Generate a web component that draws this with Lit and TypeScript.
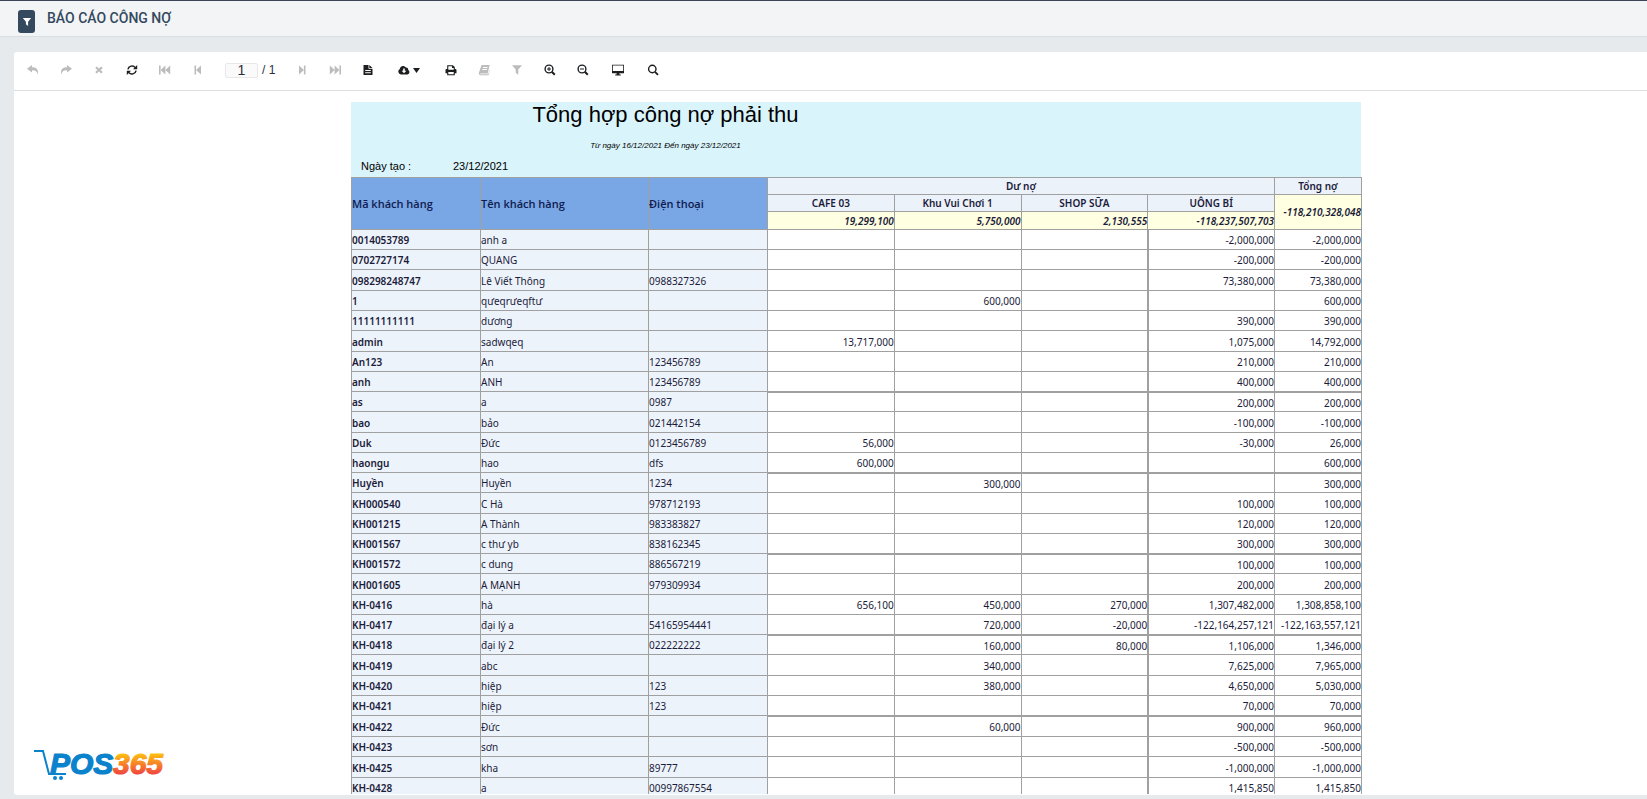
import { LitElement, html, css, svg } from "lit";
import { customElement } from "lit/decorators.js";

type Row = [string, string, string, string, string, string, string, string];

const ROWS: Row[] = [
  ["0014053789", "anh a", "", "", "", "", "-2,000,000", "-2,000,000"],
  ["0702727174", "QUANG", "", "", "", "", "-200,000", "-200,000"],
  ["098298248747", "Lê Viết Thông", "0988327326", "", "", "", "73,380,000", "73,380,000"],
  ["1", "qưeqrưeqftư", "", "", "600,000", "", "", "600,000"],
  ["11111111111", "dương", "", "", "", "", "390,000", "390,000"],
  ["admin", "sadwqeq", "", "13,717,000", "", "", "1,075,000", "14,792,000"],
  ["An123", "An", "123456789", "", "", "", "210,000", "210,000"],
  ["anh", "ANH", "123456789", "", "", "", "400,000", "400,000"],
  ["as", "a", "0987", "", "", "", "200,000", "200,000"],
  ["bao", "bảo", "021442154", "", "", "", "-100,000", "-100,000"],
  ["Duk", "Đức", "0123456789", "56,000", "", "", "-30,000", "26,000"],
  ["haongu", "hao", "dfs", "600,000", "", "", "", "600,000"],
  ["Huyền", "Huyền", "1234", "", "300,000", "", "", "300,000"],
  ["KH000540", "C Hà", "978712193", "", "", "", "100,000", "100,000"],
  ["KH001215", "A Thành", "983383827", "", "", "", "120,000", "120,000"],
  ["KH001567", "c thư yb", "838162345", "", "", "", "300,000", "300,000"],
  ["KH001572", "c dung", "886567219", "", "", "", "100,000", "100,000"],
  ["KH001605", "A MẠNH", "979309934", "", "", "", "200,000", "200,000"],
  ["KH-0416", "hà", "", "656,100", "450,000", "270,000", "1,307,482,000", "1,308,858,100"],
  ["KH-0417", "đại lý a", "54165954441", "", "720,000", "-20,000", "-122,164,257,121", "-122,163,557,121"],
  ["KH-0418", "đại lý 2", "022222222", "", "160,000", "80,000", "1,106,000", "1,346,000"],
  ["KH-0419", "abc", "", "", "340,000", "", "7,625,000", "7,965,000"],
  ["KH-0420", "hiệp", "123", "", "380,000", "", "4,650,000", "5,030,000"],
  ["KH-0421", "hiệp", "123", "", "", "", "70,000", "70,000"],
  ["KH-0422", "Đức", "", "", "60,000", "", "900,000", "960,000"],
  ["KH-0423", "sơn", "", "", "", "", "-500,000", "-500,000"],
  ["KH-0425", "kha", "89777", "", "", "", "-1,000,000", "-1,000,000"],
  ["KH-0428", "a", "00997867554", "", "", "", "1,415,850", "1,415,850"],
];

// All glyphs are drawn on a 12 × 12 grid.
const ICONS = {
  undo: svg`<path d="M5 1 0 4.800 5 8.600V6.300C8 6.200 9.800 7 10.600 10.400 12 6 9.600 3.300 5 3.300Z"/>`,
  redo: svg`<path d="M7 1l5 3.800L7 8.600V6.300C4 6.200 2.200 7 1.400 10.400 0 6 2.400 3.300 7 3.300Z"/>`,
  close: svg`<path d="M3 3.200l6 5.600M9 3.200l-6 5.600" stroke="currentColor" stroke-width="2.200"/>`,
  refresh: svg`<path d="M1.900 5.400A4.200 4.200 0 0 1 9.300 3.600M10.100 6.600A4.200 4.200 0 0 1 2.700 8.400" fill="none" stroke="currentColor" stroke-width="1.500"/><path d="M11.200 1v4.200H7ZM.8 11V6.800H5Z"/>`,
  first: svg`<path d="M0 1.500h1.600v9H0ZM1.600 6 6.400 1.600v8.800ZM6.400 6l4.800-4.400v8.800Z"/>`,
  prev: svg`<path d="M2.500 1.500h1.600v9H2.500ZM4.100 6l4.900-4.400v8.800Z"/>`,
  next: svg`<path d="M9.500 1.500H7.900v9h1.600ZM7.900 6 3 1.600v8.800Z"/>`,
  last: svg`<path d="M12 1.500h-1.600v9H12ZM10.400 6 5.600 1.600v8.800ZM5.600 6 .8 1.600v8.800Z"/>`,
  doc: svg`<path fill-rule="evenodd" d="M1.500 1h5v3.800h4V11h-9ZM7.300 1l3.200 3H7.300ZM3.200 6v1h5.600V6ZM3.200 8.200v1h5.600v-1Z"/>`,
  cloud: svg`<path fill-rule="evenodd" d="M3 10.400A2.900 2.900 0 0 1 1.800 5 3.400 3.400 0 0 1 8 3.500 2.200 2.200 0 0 1 10.200 6 2.400 2.400 0 0 1 9.600 10.400ZM5.200 4.600v2.200H3.600L6 9.300l2.400-2.500H6.800V4.600Z"/>`,
  print: svg`<path fill-rule="evenodd" d="M2.200 5V1.200h5.600l2 1.800v2h.7A1.200 1.200 0 0 1 11.500 6v3.300H9.800v1.900H2.200V9.300H.5V6a1 1 0 0 1 1-1ZM3.300 2.200V5.700h5.400V3.900H7V2.200ZM3.300 8v2.200h5.400V8Z"/>`,
  book: svg`<path fill-rule="evenodd" d="M3.600 1h8L9.700 9.500H2.200a.6.6 0 0 0 .2.700h8L11.800 4 11 10.500Q10.800 11.200 10 11.200H2.400Q.6 10.800.8 9ZM5 3l-.2.900h4.600l.2-.9ZM4.500 5l-.2.900h4.600l.2-.9Z"/>`,
  filter: svg`<path d="M1 1.200h10L7.300 5.600v5.200L4.700 8.800V5.600Z"/>`,
  zoomIn: svg`<circle cx="5" cy="5" r="3.900" fill="none" stroke="currentColor" stroke-width="1.400"/><path d="M7.800 7.800l3 3" stroke="currentColor" stroke-width="2"/><path d="M3 5h4M5 3v4" stroke="currentColor" stroke-width="1"/>`,
  zoomOut: svg`<circle cx="5" cy="5" r="3.900" fill="none" stroke="currentColor" stroke-width="1.400"/><path d="M7.800 7.800l3 3" stroke="currentColor" stroke-width="2"/><path d="M3 5h4" stroke="currentColor" stroke-width="1"/>`,
  monitor: svg`<path fill-rule="evenodd" d="M0 .8h12v8.400H7.400v1.200h1.400v1H3.200v-1h1.400V9.200H0ZM.8 1.600v5.500h10.400V1.600Z"/>`,
  search: svg`<circle cx="5.300" cy="5" r="3.700" fill="none" stroke="currentColor" stroke-width="1.400"/><path d="M8 7.800l3 3" stroke="currentColor" stroke-width="1.800"/>`,
};

@customElement("app-root")
export class AppRoot extends LitElement {
  static styles = css`
    :host {
      display: flex;
      flex-direction: column;
      height: 100vh;
      box-sizing: border-box;
      background: #e6eaed;
      color: #14142c;
      font-family: "Liberation Sans", Arial, sans-serif;
      overflow: hidden;
    }
    * { box-sizing: border-box; }
    button { border: 0; padding: 0; background: none; color: inherit; font: inherit; }
    svg { display: block; fill: currentColor; }

    .topbar {
      display: flex;
      gap: 12px;
      height: 37px;
      flex: none;
      padding: 9px 18px 0;
      border-top: 1px solid #3a4358;
      border-bottom: 1px solid #d9dee2;
      background: #f2f4f6;
    }
    .filter-toggle {
      display: grid;
      place-items: center;
      width: 17px;
      height: 23px;
      border-radius: 3px;
      background: #34495e;
      color: #fff;
    }
    .filter-toggle svg { width: 10px; height: 10px; }
    h1 {
      margin: 0;
      color: #34495e;
      font: 500 14px/17px Roboto, sans-serif;
    }

    .panel {
      flex: 1;
      min-height: 0;
      display: flex;
      flex-direction: column;
      position: relative;
      margin: 15px 0 4px 14px;
      padding-bottom: 1px;
      border-radius: 3px 0 0 3px;
      background: #fff;
    }
    .toolbar {
      display: flex;
      align-items: center;
      flex: none;
      height: 39px;
      padding: 0 0 2px 2px;
      border-bottom: 1px solid #dcdfe1;
      color: #1c1e20;
    }
    .tool {
      display: flex;
      align-items: center;
      justify-content: center;
      gap: 3px;
      width: 33px;
      height: 24px;
    }
    .tool svg { width: 12px; height: 12px; }
    .tool:disabled { color: #bcbcbc; }
    .tool.menu { width: 50px; }
    .tool.monitor { width: 37px; }
    .tool .caret { width: 7px; height: 5px; }
    .pager {
      display: flex;
      align-items: center;
      gap: 4px;
      width: 71px;
      padding-left: 11px;
      font-size: 12px;
      color: #2a2f3a;
    }
    .pager input {
      width: 33px;
      height: 15px;
      padding: 0;
      border: 1px solid #e8e8e8;
      border-radius: 2px;
      background: #fafafa;
      color: #2a2f3a;
      text-align: center;
      font: 14px/13px "Liberation Sans", Arial, sans-serif;
    }

    .viewer {
      flex: 1;
      min-height: 0;
      overflow: hidden;
      padding: 11px 0 0 52px;
    }
    .report { width: 1011px; margin: 0 auto; }
    .heading {
      height: 75px;
      width: 1010px;
      background: #daf4fb;
      color: #000;
    }
    h2 {
      margin: 0;
      padding-right: 381px;
      text-align: center;
      font-weight: 400;
      font-size: 22px;
      line-height: 26px;
    }
    .range {
      margin: 0;
      padding: 11px 381px 0 0;
      text-align: center;
      font-style: italic;
      font-size: 8px;
      line-height: 14px;
    }
    .created {
      display: flex;
      margin: 0;
      padding: 6px 0 0 10px;
      font-size: 11px;
      line-height: 14px;
    }
    .created dt { width: 92px; }
    .created dd { margin: 0; }

    table {
      width: 100%;
      table-layout: fixed;
      border-collapse: separate;
      border-spacing: 0;
      border-right: 1px solid #a0a0a0;
      font: 10px/12px "Noto Sans", sans-serif;
      color: #1b1b3a;
    }
    th, td {
      padding: 0;
      border-top: 1px solid #a0a0a0;
      border-left: 1px solid #a0a0a0;
      white-space: nowrap;
    }
    .c-code { width: 129px; }
    .c-name { width: 168px; }
    .c-phone { width: 119px; }
    .c-total { width: 87px; }
    thead tr { height: 17px; }
    thead tr:last-child { height: 18px; }
    thead th { background: #ebf2fa; font-weight: 600; }
    thead .key {
      background: #79a6e4;
      color: #101c50;
      text-align: left;
      font: 600 11px/14px "Open Sans", sans-serif;
    }
    thead .sum {
      background: #ffffe1;
      text-align: right;
      font-weight: 600;
      font-style: italic;
    }
    tbody tr { height: 20px; }
    tbody tr:is(:nth-child(3), :nth-child(6), :nth-child(10), :nth-child(14),
      :nth-child(18), :nth-child(22), :nth-child(25), :nth-child(27)) { height: 21px; }
    tbody th, tbody td { padding-top: 1px; }
    tbody th { font-weight: 600; }
    tbody th, .text { background: #edf3fb; text-align: left; }
    .num { text-align: right; }
    tbody tr:nth-child(4n + 9) .num { border-top-width: 2px; }
    tbody .num:nth-child(7) { border-left-width: 2px; }

    .logo {
      position: absolute;
      left: 19px;
      bottom: 13px;
      width: 134px;
      height: 34px;
    }
    .logo text {
      font: italic 700 30px "Liberation Sans", Arial, sans-serif;
      stroke-width: 1.200px;
      stroke-linejoin: round;
    }
  `;

  private tool(label: string, icon: keyof typeof ICONS, disabled = false) {
    return html`<button class="tool ${icon}" aria-label=${label} ?disabled=${disabled}>
      <svg viewBox="0 0 12 12">${ICONS[icon]}</svg>
    </button>`;
  }

  private row([code, name, phone, ...nums]: Row) {
    return html`<tr>
      <th scope="row">${code}</th>
      <td class="text">${name}</td>
      <td class="text">${phone}</td>
      ${nums.map((n) => html`<td class="num">${n}</td>`)}
    </tr>`;
  }

  render() {
    return html`
      <header class="topbar">
        <button class="filter-toggle" aria-label="Bộ lọc">
          <svg viewBox="0 0 12 12">${ICONS.filter}</svg>
        </button>
        <h1>BÁO CÁO CÔNG NỢ</h1>
      </header>
      <main class="panel">
        <div class="toolbar">
          ${this.tool("Lùi", "undo", true)}
          ${this.tool("Tiến", "redo", true)}
          ${this.tool("Dừng", "close", true)}
          ${this.tool("Tải lại", "refresh")}
          ${this.tool("Trang đầu", "first", true)}
          ${this.tool("Trang trước", "prev", true)}
          <div class="pager">
            <input aria-label="Trang" value="1" /><span>/ 1</span>
          </div>
          ${this.tool("Trang sau", "next", true)}
          ${this.tool("Trang cuối", "last", true)}
          ${this.tool("Bản in", "doc")}
          <button class="tool menu" aria-label="Xuất file">
            <svg viewBox="0 0 12 12">${ICONS.cloud}</svg>
            <svg class="caret" viewBox="0 0 7 5"><path d="M0 0h7L3.500 5Z" /></svg>
          </button>
          ${this.tool("In", "print")}
          ${this.tool("Mục lục", "book", true)}
          ${this.tool("Tham số", "filter", true)}
          ${this.tool("Phóng to", "zoomIn")}
          ${this.tool("Thu nhỏ", "zoomOut")}
          ${this.tool("Toàn trang", "monitor")}
          ${this.tool("Tìm kiếm", "search")}
        </div>
        <div class="viewer">
          <article class="report">
            <div class="heading">
              <h2>Tổng hợp công nợ phải thu</h2>
              <p class="range">Từ ngày 16/12/2021 Đến ngày 23/12/2021</p>
              <dl class="created"><dt>Ngày tạo :</dt><dd>23/12/2021</dd></dl>
            </div>
            <table>
              <colgroup>
                <col class="c-code" /><col class="c-name" /><col class="c-phone" />
                <col span="4" /><col class="c-total" />
              </colgroup>
              <thead>
                <tr>
                  <th class="key" rowspan="3">Mã khách hàng</th>
                  <th class="key" rowspan="3">Tên khách hàng</th>
                  <th class="key" rowspan="3">Điện thoại</th>
                  <th colspan="4">Dư nợ</th>
                  <th>Tổng nợ</th>
                </tr>
                <tr>
                  <th>CAFE 03</th>
                  <th>Khu Vui Chơi 1</th>
                  <th>SHOP SỮA</th>
                  <th>UÔNG BÍ</th>
                  <td class="sum" rowspan="2">-118,210,328,048</td>
                </tr>
                <tr>
                  <td class="sum">19,299,100</td>
                  <td class="sum">5,750,000</td>
                  <td class="sum">2,130,555</td>
                  <td class="sum">-118,237,507,703</td>
                </tr>
              </thead>
              <tbody>
                ${ROWS.map((r) => this.row(r))}
              </tbody>
            </table>
          </article>
        </div>
        <svg class="logo" viewBox="0 0 134 34" role="img" aria-label="POS365">
          <defs>
            <linearGradient id="sun" x1="0" y1="0" x2="0" y2="1">
              <stop offset="0.2" stop-color="#fdc010" />
              <stop offset="0.8" stop-color="#f04a3e" />
            </linearGradient>
          </defs>
          <path d="M1 3h9l6 23h17" fill="none" stroke="#0b82cc" stroke-width="2" />
          <circle cx="22" cy="30" r="2" fill="#0b82cc" />
          <circle cx="28" cy="30" r="2" fill="#0b82cc" />
          <text x="17" y="26" fill="#0b82cc" stroke="#0b82cc">POS</text>
          <text x="80" y="26" fill="url(#sun)" stroke="url(#sun)">365</text>
        </svg>
      </main>
    `;
  }
}
